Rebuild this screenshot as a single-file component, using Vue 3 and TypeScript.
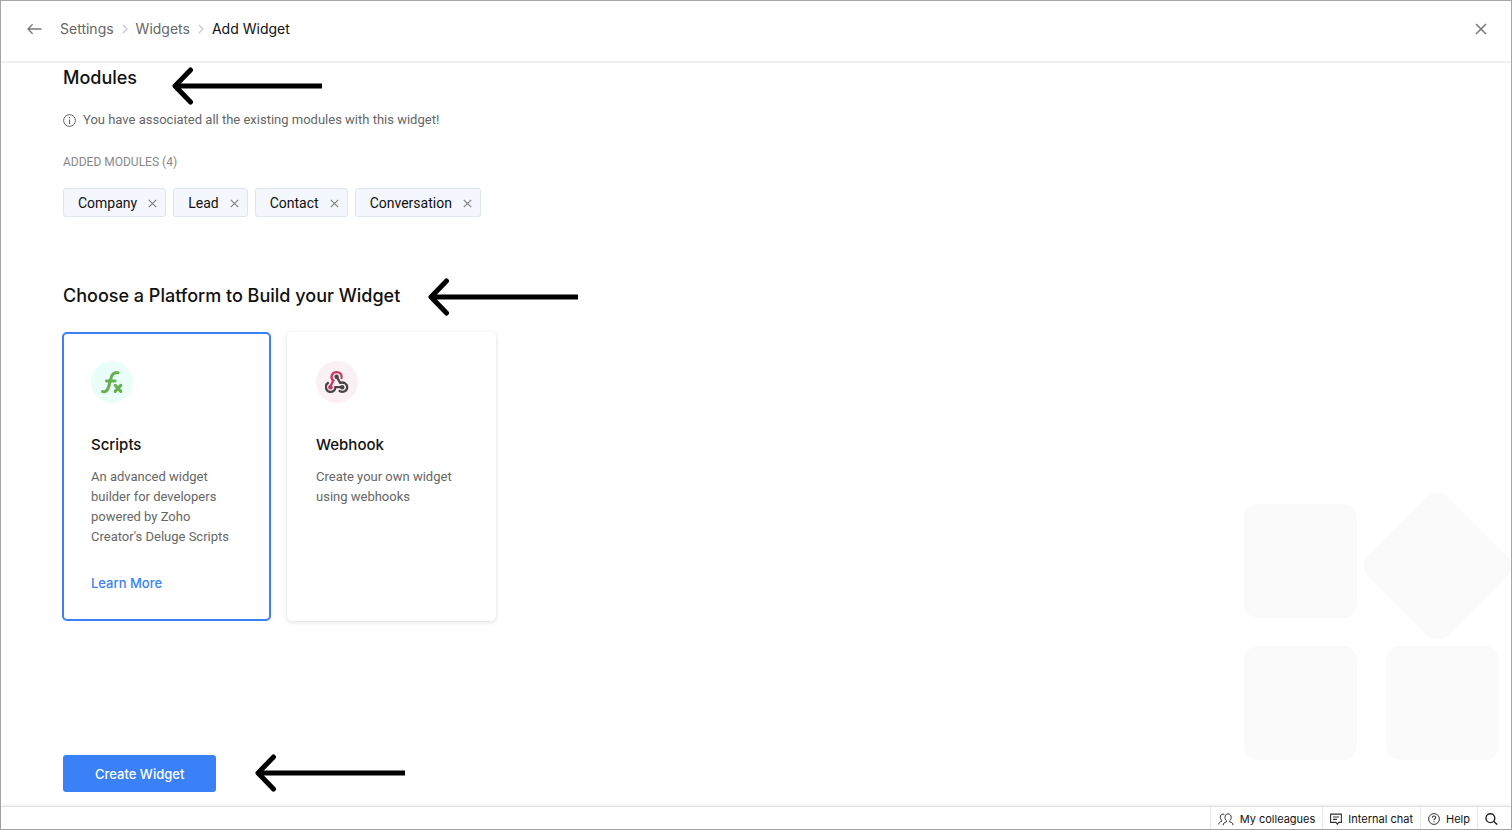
<script setup lang="ts">
import { ref } from 'vue'

interface Platform {
  id: string
  title: string
  description: string
  link?: string
}

const modules = ref<string[]>(['Company', 'Lead', 'Contact', 'Conversation'])
const selected = ref<string>('scripts')

const platforms: Platform[] = [
  {
    id: 'scripts',
    title: 'Scripts',
    description: "An advanced widget builder for developers powered by Zoho Creator's Deluge Scripts",
    link: 'Learn More',
  },
  {
    id: 'webhook',
    title: 'Webhook',
    description: 'Create your own widget using webhooks',
  },
]

function removeModule(name: string): void {
  modules.value = modules.value.filter((m) => m !== name)
}
</script>

<template>
  <div class="page">
    <header class="topbar">
      <button class="icon-btn" type="button" aria-label="Back">
        <svg width="16" height="12" viewBox="0 0 16 12" fill="none" stroke="#777" stroke-width="1.3">
          <path d="M14.5 6H1.5M5.6 1.2L1 6L5.6 10.8" />
        </svg>
      </button>
      <nav class="crumbs" aria-label="Breadcrumb">
        <a href="#settings">Settings</a>
        <svg width="6" height="10" viewBox="0 0 6 10" fill="none" stroke="#c4c4c4" stroke-width="1.1">
          <path d="M1 1L5 5L1 9" />
        </svg>
        <a href="#widgets">Widgets</a>
        <svg width="6" height="10" viewBox="0 0 6 10" fill="none" stroke="#c4c4c4" stroke-width="1.1">
          <path d="M1 1L5 5L1 9" />
        </svg>
        <span class="current">Add Widget</span>
      </nav>
      <button class="icon-btn close" type="button" aria-label="Close">
        <svg width="12" height="12" viewBox="0 0 12 12" fill="none" stroke="#777" stroke-width="1.5">
          <path d="M1 1L11 11M11 1L1 11" />
        </svg>
      </button>
    </header>

    <main class="content">
      <svg class="backdrop" width="267" height="270" viewBox="0 0 267 270" fill="#fafafa" aria-hidden="true">
        <rect x="0" y="14" width="113" height="114" rx="14" />
        <rect x="0" y="156" width="113" height="114" rx="14" />
        <rect x="142" y="156" width="113" height="114" rx="14" />
        <rect x="137" y="19.5" width="113" height="113" rx="15" transform="rotate(45 193.5 76)" />
      </svg>

      <section class="modules">
        <h2>Modules</h2>
        <svg class="pointer pointer-modules" width="150" height="38" viewBox="0 0 150 38" fill="none" stroke="#000" aria-hidden="true">
          <path d="M150 19H4" stroke-width="5" />
          <path d="M18.5 3L3 19L18.5 35" stroke-width="5" stroke-linecap="round" stroke-linejoin="round" />
        </svg>
        <p class="info">
          <svg width="13" height="13" viewBox="0 0 13 13" fill="none" stroke="#666">
            <circle cx="6.5" cy="6.5" r="5.9" />
            <path d="M6.5 5.5V10M6.5 3V4.3" stroke-width="1.1" />
          </svg>
          You have associated all the existing modules with this widget!
        </p>
        <h3>ADDED MODULES ({{ modules.length }})</h3>
        <ul class="chips">
          <li v-for="name in modules" :key="name">
            {{ name }}
            <button type="button" :aria-label="`Remove ${name}`" @click="removeModule(name)">
              <svg width="9" height="9" viewBox="0 0 9 9" fill="none" stroke="#808080" stroke-width="1.2">
                <path d="M0.8 0.8L8.2 8.2M8.2 0.8L0.8 8.2" />
              </svg>
            </button>
          </li>
        </ul>
      </section>

      <section class="platforms">
        <h2>Choose a Platform to Build your Widget</h2>
        <svg class="pointer pointer-platforms" width="150" height="38" viewBox="0 0 150 38" fill="none" stroke="#000" aria-hidden="true">
          <path d="M150 19H4" stroke-width="5" />
          <path d="M18.5 3L3 19L18.5 35" stroke-width="5" stroke-linecap="round" stroke-linejoin="round" />
        </svg>
        <div class="cards">
          <label v-for="p in platforms" :key="p.id" class="card" :class="{ selected: selected === p.id }">
            <input v-model="selected" type="radio" name="platform" :value="p.id" />
            <span class="badge" :class="p.id">
              <svg v-if="p.id === 'scripts'" width="24" height="24" viewBox="0 0 24 24" fill="none" stroke="#65b050" stroke-linecap="round">
                <path d="M2.6 21.6C6 22.2 7.6 20.4 8.6 17L11.3 7.2C12.2 3.6 14 2.2 18 2.8" stroke-width="3" />
                <path d="M6.4 11H15.2" stroke-width="2.8" />
                <path d="M15.2 15.4L20.8 21.4M20.8 15.4L15.2 21.4" stroke-width="3.1" />
              </svg>
              <svg v-else width="24" height="24" viewBox="0 0 24 24" fill="none" stroke-width="2.3" stroke-linecap="round">
                <path d="M16.5 8C17.4 4.6 15 2.2 11.6 2.2C6.6 2.2 4.8 7.6 8.4 10.6L5.6 16" stroke="#c83a61" />
                <circle cx="5.4" cy="17.2" r="2.3" fill="#c83a61" stroke="none" />
                <path d="M12 7.4L15.2 12.8C19 11.6 22.2 14.2 22.2 17.2C22.2 21 18 23 14.6 21" stroke="#484548" />
                <circle cx="11.6" cy="6.8" r="2.2" fill="#484548" stroke="none" />
                <path d="M3 13C-0.4 15 0.4 21 4.8 21.9C8 22.2 10.2 20.4 10.4 17.2H17" stroke="#484548" />
                <circle cx="17.2" cy="17.2" r="2.2" fill="#484548" stroke="none" />
              </svg>
            </span>
            <strong>{{ p.title }}</strong>
            <span class="desc">{{ p.description }}</span>
            <a v-if="p.link" href="#learn-more">{{ p.link }}</a>
          </label>
        </div>
      </section>

      <div class="actions">
        <button class="primary" type="button">Create Widget</button>
        <svg class="pointer pointer-create" width="150" height="38" viewBox="0 0 150 38" fill="none" stroke="#000" aria-hidden="true">
          <path d="M150 19H4" stroke-width="5" />
          <path d="M18.5 3L3 19L18.5 35" stroke-width="5" stroke-linecap="round" stroke-linejoin="round" />
        </svg>
      </div>
    </main>

    <footer class="dock">
      <button type="button">
        <svg width="16" height="13" viewBox="0 0 16 13" fill="none" stroke="#333">
          <path d="M5.2 12.2C5.2 10.2 6.4 9.4 8.4 8.9L8.6 7.8C7.4 6.9 7 5.8 7 4.4C7 2.3 8.2 0.9 10.1 0.9C12 0.9 13.2 2.3 13.2 4.4C13.2 5.8 12.8 6.9 11.6 7.8L11.8 8.9C13.8 9.4 15 10.2 15 12.2" />
          <path d="M0.7 11.4C0.8 9.6 1.8 8.9 3.6 8.4L3.8 7.4C2.7 6.6 2.3 5.6 2.3 4.3C2.3 1.8 4.4 0.5 6.4 1.3" />
        </svg>
        My colleagues
      </button>
      <button type="button">
        <svg width="12" height="12" viewBox="0 0 12 12" fill="none" stroke="#333" stroke-width="1.1">
          <path d="M0.6 1.1H11.4V9.4H8.8L7.4 11.2L6 9.4H0.6ZM3 4H9M3 6.4H7" />
        </svg>
        Internal chat
      </button>
      <button type="button">
        <svg width="12" height="12" viewBox="0 0 12 12" fill="none" stroke="#333">
          <circle cx="6" cy="6" r="5.4" />
          <path d="M4.3 4.7C4.3 2.4 7.7 2.4 7.7 4.6C7.7 5.8 6 5.8 6 7.2M6 8.2V9.3" stroke-width="1.1" />
        </svg>
        Help
      </button>
      <button type="button" aria-label="Search">
        <svg width="13" height="12" viewBox="0 0 13 12" fill="none" stroke="#222" stroke-width="1.4">
          <circle cx="5.4" cy="5.2" r="4.4" />
          <path d="M8.6 8.2L12.2 11.6" />
        </svg>
      </button>
    </footer>
  </div>
</template>

<style>
body {
  margin: 0;
  background: #fff;
}
</style>

<style scoped>
.page {
  box-sizing: border-box;
  min-height: 100vh;
  display: flex;
  flex-direction: column;
  border: 1px solid #a5a5a5;
  background: #fff;
  color: #111;
  font-family: Roboto, "Liberation Sans", sans-serif;
  font-size: 13px;
}

button {
  padding: 0;
  border: 0;
  background: none;
  color: inherit;
  font: inherit;
  cursor: pointer;
}

svg {
  display: block;
  flex: none;
}

a {
  text-decoration: none;
}

h2,
h3,
p,
ul {
  margin: 0;
}

h2,
.crumbs,
.card strong,
.card a,
.primary,
.dock {
  font-family: Inter, "Liberation Sans", sans-serif;
}

.topbar {
  display: flex;
  align-items: center;
  padding: 17px 24px 21px 26px;
  border-bottom: 2px solid #f0f0f0;
}

.crumbs {
  display: flex;
  align-items: center;
  gap: 8px;
  margin-left: 17px;
  font-size: 14px;
  line-height: 22px;
}

.crumbs a {
  color: #666;
}

.close {
  margin-left: auto;
}

.content {
  position: relative;
  flex: 1;
  display: flex;
  flex-direction: column;
  padding: 3px 62px 14px;
  overflow: hidden;
}

.backdrop {
  position: absolute;
  right: 0;
  bottom: 46px;
}

section,
.actions {
  position: relative;
}

h2 {
  font-size: 18px;
  line-height: 24px;
  font-weight: 500;
}

.pointer {
  position: absolute;
}

.pointer-modules {
  left: 109px;
  top: 1px;
}

.pointer-platforms {
  left: 365px;
  top: -6px;
}

.pointer-create {
  left: 192px;
  top: -1px;
}

.info {
  display: flex;
  align-items: center;
  gap: 7px;
  margin-top: 20px;
  line-height: 20px;
  color: #666;
}

h3 {
  margin-top: 24px;
  font-size: 12px;
  line-height: 16px;
  font-weight: 400;
  color: #888;
}

.chips {
  display: flex;
  flex-wrap: wrap;
  gap: 7px;
  margin-top: 18px;
  padding: 0;
  list-style: none;
}

.chips li {
  display: flex;
  align-items: center;
  gap: 11px;
  padding: 1px 8px 0 14px;
  border: 1px solid #dde7f1;
  border-radius: 3px;
  background: #f4f7fd;
  font-size: 14px;
  line-height: 26px;
}

.platforms {
  margin-top: 67px;
}

.cards {
  display: grid;
  grid-template-columns: repeat(auto-fill, 209px);
  gap: 16px;
  margin: 24px 0 0 -1px;
}

.card {
  display: flex;
  flex-direction: column;
  align-items: flex-start;
  box-sizing: border-box;
  min-height: 289px;
  padding: 27px 27px 26px;
  border: 2px solid transparent;
  border-radius: 5px;
  background: #fff;
  box-shadow: 0 1px 4px rgba(0, 0, 0, 0.15);
  cursor: pointer;
}

.card.selected {
  border-color: #3a80f7;
  box-shadow: none;
}

.card input {
  position: absolute;
  opacity: 0;
  pointer-events: none;
}

.badge {
  display: grid;
  place-items: center;
  width: 42px;
  height: 42px;
  border-radius: 50%;
}

.badge.scripts {
  background: #eafdf8;
}

.badge.webhook {
  background: #fbf0f4;
}

.card strong {
  margin-top: 32px;
  font-size: 15px;
  line-height: 20px;
  font-weight: 500;
}

.desc {
  margin-top: 12px;
  line-height: 20px;
  color: #666;
}

.card a {
  margin-top: 26px;
  line-height: 20px;
  font-weight: 500;
  color: #3a80f7;
}

.actions {
  margin-top: auto;
}

.primary {
  padding: 1px 32px 0;
  border-radius: 3px;
  background: #3a80f7;
  color: #fff;
  font-weight: 500;
  line-height: 36px;
}

.dock {
  display: flex;
  justify-content: flex-end;
  border-top: 1px solid #e2e2e2;
  box-shadow: 0 -1px 3px rgba(0, 0, 0, 0.08);
  font-size: 11px;
  line-height: 20px;
}

.dock button {
  display: flex;
  align-items: center;
  gap: 6px;
  padding: 2px 7px 0;
  border-left: 1px solid #e8e8e8;
}

.dock button:last-child {
  padding-right: 13px;
}
</style>
